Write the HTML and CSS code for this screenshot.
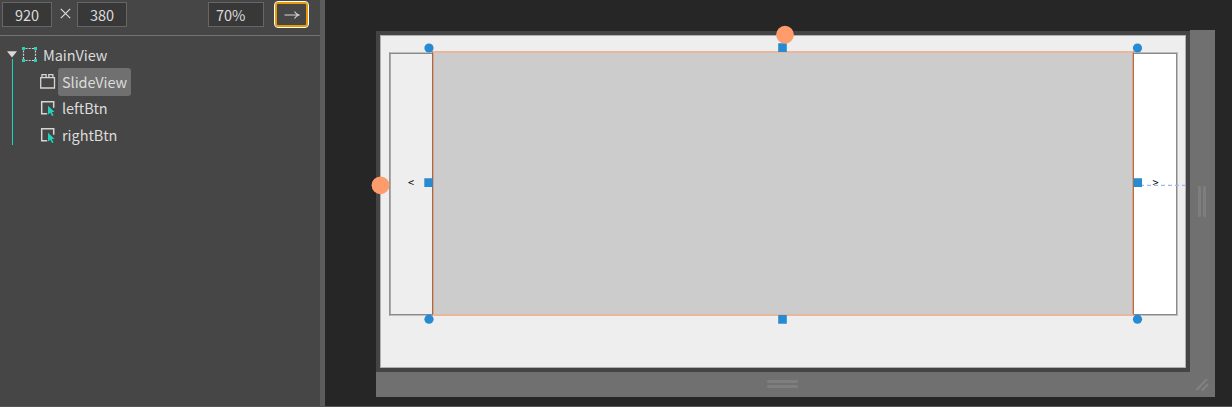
FILE: index.html
```html
<!DOCTYPE html>
<html lang="en">
<head>
<meta charset="utf-8">
<title>MainView</title>
<link rel="stylesheet" href="styles.css">
</head>
<body>
<div class="app">
  <aside class="sidebar">
    <div class="toolbar">
      <div class="field width">920</div>
      <svg class="times" width="11" height="11" viewBox="0 0 11 11"><path d="M.8.8l9.4 9.4M10.2.8L.8 10.2"/></svg>
      <div class="field height">380</div>
      <div class="field zoom">70%</div>
      <button class="go" aria-label="Go"><svg width="16" height="10" viewBox="0 0 16 10"><path d="M.5 5h14M10.5 1.5Q12 4 14.8 5Q12 6 10.5 8.5"/></svg></button>
    </div>
    <div class="tree">
      <div class="rail">
        <svg width="10" height="7" viewBox="0 0 10 7"><path d="M0 .3h10L5 6.5z" fill="#d8d8d8"/></svg>
        <div class="stem"></div>
      </div>
      <div class="nodes">
        <div class="node root">
          <svg width="16" height="16" viewBox="0 0 16 16"><path d="M2 1.500h12M2 13.500h12M1.500 2v12M13.500 2v12" fill="none" stroke="#d0d0d0" stroke-width="1.2" stroke-dasharray="2 1.200" stroke-dashoffset="-1.500"/><path d="M0 0h3v3H0zM12 0h3v3h-3zM0 12h3v3H0zM12 12h3v3h-3z" fill="#22d3bc"/></svg>
          <span>MainView</span>
        </div>
        <div class="node">
          <svg width="16" height="16" viewBox="0 0 16 16"><path d="M.7 3.600h13.800v10.400H.7zM2 3V.7h4.100V3M8.800 3V.7h4.100V3" fill="none" stroke="#d5d5d5" stroke-width="1.3"/></svg>
          <span class="selected">SlideView</span>
        </div>
        <div class="node">
          <svg width="16" height="16" viewBox="0 0 16 16"><path d="M7.200 13.700H1.700V1.700h12v6" fill="none" stroke="#d5d5d5" stroke-width="1.5"/><path d="M8 5.800l6.500 6.100-2.700.1 1.700 3.200-1.500.8-1.700-3.300L8 14.500z" fill="#22d3bc"/></svg>
          <span>leftBtn</span>
        </div>
        <div class="node">
          <svg width="16" height="16" viewBox="0 0 16 16"><path d="M7.200 13.700H1.700V1.700h12v6" fill="none" stroke="#d5d5d5" stroke-width="1.5"/><path d="M8 5.800l6.500 6.100-2.700.1 1.700 3.200-1.500.8-1.700-3.300L8 14.500z" fill="#22d3bc"/></svg>
          <span>rightBtn</span>
        </div>
      </div>
    </div>
  </aside>
  <main class="canvas">
    <div class="frame">
      <div class="artboard">
        <div class="side prev">&lt;</div>
        <div class="slide"></div>
        <div class="side next">&gt;</div>
      </div>
    </div>
    <div class="resize right"><i></i><i></i></div>
    <div class="resize bottom"><i></i><i></i></div>
    <svg class="overlay" width="907" height="407" viewBox="325 0 907 407">
      <path d="M1140 185.300H1186" stroke="#9ab6ee" stroke-width="1.300" stroke-dasharray="4 3"/>
      <g fill="#288bd2">
        <circle cx="429" cy="48" r="4.600"/><circle cx="1137.500" cy="48" r="4.600"/>
        <circle cx="429" cy="319.200" r="4.600"/><circle cx="1137.500" cy="319.200" r="4.600"/>
        <path d="M778.200 43.300h8.600v8.600h-8.600zM778.200 315.100h8.600v8.600h-8.600zM424.300 178.300h8.600v8.600h-8.600zM1133.400 178.300h8.600v8.600h-8.600z"/>
      </g>
      <g fill="#ff9c6b"><circle cx="785" cy="34.700" r="8.900"/><circle cx="380.500" cy="185.300" r="8.900"/></g>
      <path d="M1197 389.500l9.500-10M1202.500 390l5-5.500" stroke="#828282" stroke-width="2" stroke-linecap="round"/>
    </svg>
  </main>
</div>
</body>
</html>
```
FILE: styles.css
```css
* { box-sizing: border-box; }
body { margin: 0; background: #262626; overflow: hidden; }
.app {
  display: flex;
  width: 1232px;
  height: 407px;
  border-bottom: 1px solid #555;
  font: 14.500px/27px "Noto Sans CJK SC", "Open Sans", sans-serif;
  color: #dcdcdc;
}
.sidebar {
  width: 325px;
  flex: none;
  background: #464646;
  border-right: 5px solid #5c5c5c;
}
.toolbar {
  display: flex;
  height: 36px;
  padding: 2px 0 0 2px;
  border-bottom: 1px solid #737373;
}
.field {
  height: 25px;
  border: 1px solid #666;
  background: #383838;
  line-height: 24px;
  text-align: center;
}
.width, .height { width: 50px; }
.times { margin: 6px 6px 0 8px; fill: none; stroke: #dcdcdc; stroke-width: 1.2; }
.zoom { width: 56px; margin-left: 81px; padding-left: 7px; text-align: left; }
.go {
  display: flex;
  align-items: center;
  justify-content: center;
  width: 35px;
  height: 27px;
  margin: -1px 0 0 10px;
  padding: 0;
  border: 1px solid #fff;
  border-radius: 4px;
  background: #464646;
  box-shadow: inset 0 0 0 2px #e99a05;
}
.go svg { fill: none; stroke: #d5d5d5; stroke-width: 1.1; }
.tree { display: flex; padding: 6px 0 0 7px; }
.rail { width: 15px; padding-top: 9px; }
.rail svg { display: block; }
.stem { width: 1px; height: 86px; margin: 1px 0 0 5px; background: #22d3bc; }
.nodes { display: flex; flex-direction: column; }
.node { display: flex; align-items: center; height: 26.600px; padding-left: 18px; }
.node svg { flex: none; }
.node span { padding: 0 4px; margin-left: 2px; border-radius: 3px; height: 28px; line-height: 28px; letter-spacing: -.05px; }
.root { padding-left: 0; }
.root span { margin-left: 1px; }
.node .selected { background: #707070; }
.canvas {
  position: relative;
  display: grid;
  grid-template-columns: 814px 25px;
  grid-template-rows: 341px 25px;
  align-content: start;
  flex: 1;
  padding: 31px 0 0 51px;
}
.frame { padding: 4px; background: #444; }
.artboard {
  display: flex;
  align-items: flex-start;
  width: 806px;
  height: 333px;
  padding: 15px 0 0 8px;
  border: 1px solid #b0b0b0;
  background: #eee;
}
.side {
  display: flex;
  align-items: center;
  justify-content: center;
  height: 264px;
  margin-top: 1px;
  border: 1px solid #bdbdbd;
  color: #000;
  font: 11px/14px "Noto Sans CJK SC", sans-serif;
  padding-bottom: 4px;
}
.prev {
  width: 43px;
  border-right: 0;
  border-left-color: #929292;
  box-shadow: inset 0 1px #8a8a8a, inset 0 -1px #8a8a8a, inset 1px 0 #aaa;
}
.next {
  width: 44px;
  background: #fff;
  border-left: 0;
  box-shadow: inset 0 1px #8a8a8a, inset 0 -1px #8a8a8a, inset -1px 0 #8a8a8a;
}
.slide {
  width: 702px;
  height: 265px;
  border: 2px solid #e9b79d;
  border-left: 1px solid #9c6b53;
  border-right: 1px solid #b66f4e;
  background: #ccc;
  box-shadow: inset 1px 0 #dfa283, inset -1px 0 #dfa283;
}
.resize { display: flex; align-items: center; justify-content: center; gap: 2px; background: #707070; }
.resize i { background: #7e7e7e; border-radius: 1px; }
.right { grid-column: 2; grid-row: 1 / 3; margin-top: -1px; padding: 0 1px 24px 0; }
.right i { width: 3px; height: 31px; }
.bottom { grid-column: 1; grid-row: 2; flex-direction: column; padding: 0 2px 2px 0; }
.bottom i { width: 31px; height: 3px; }
.overlay { position: absolute; left: 0; top: 0; }
```
